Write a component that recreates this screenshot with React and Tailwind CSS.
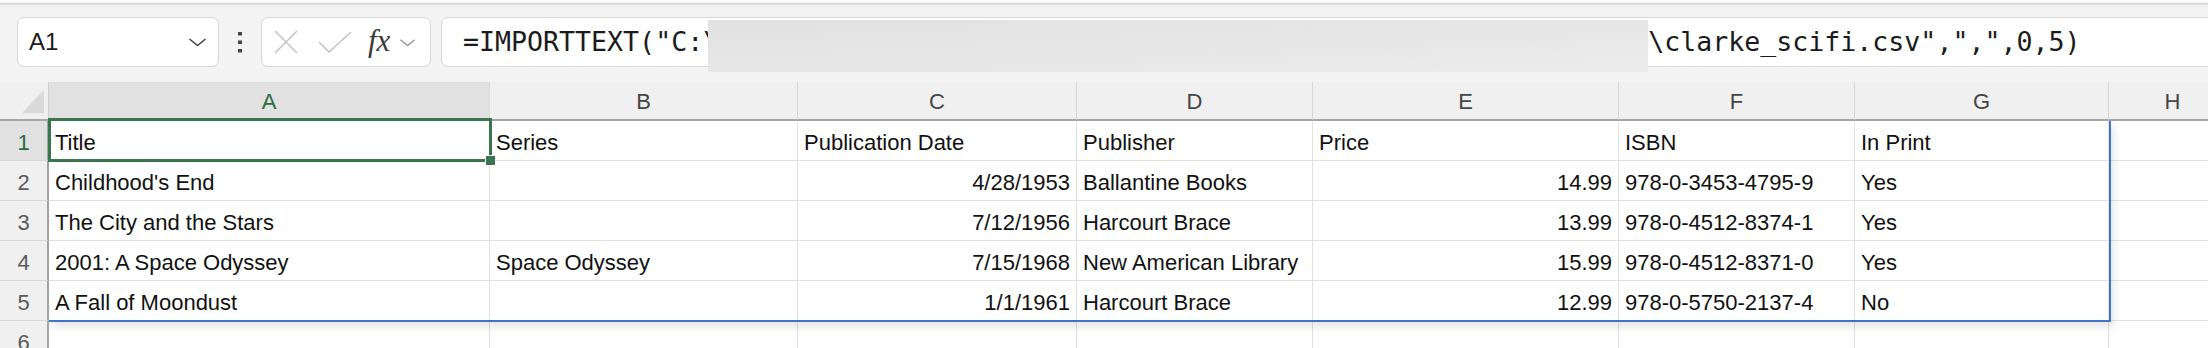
import React from 'react';

const COLS = ['A', 'B', 'C', 'D', 'E', 'F', 'G', 'H'];

// A1 holds the IMPORTTEXT formula, the rest spills from it
const ROWS = [
  ['Title', 'Series', 'Publication Date', 'Publisher', 'Price', 'ISBN', 'In Print', ''],
  ["Childhood's End", '', '4/28/1953', 'Ballantine Books', '14.99', '978-0-3453-4795-9', 'Yes', ''],
  ['The City and the Stars', '', '7/12/1956', 'Harcourt Brace', '13.99', '978-0-4512-8374-1', 'Yes', ''],
  ['2001: A Space Odyssey', 'Space Odyssey', '7/15/1968', 'New American Library', '15.99', '978-0-4512-8371-0', 'Yes', ''],
  ['A Fall of Moondust', '', '1/1/1961', 'Harcourt Brace', '12.99', '978-0-5750-2137-4', 'No', ''],
  ['', '', '', '', '', '', '', ''],
];

const isRight = (r, c) => r > 0 && (c === 2 || c === 4);

const cellFont = "font-['Liberation_Sans',sans-serif]";

const Chevron = ({ className, color = '#444' }) => (
  <svg className={className} viewBox="0 0 20 10" fill="none">
    <path d="M2 2 L10 8.5 L18 2" stroke={color} strokeWidth="1.6" />
  </svg>
);

const FormulaBar = () => (
  <div className="flex items-center pt-[13px] pb-[15px]">
    <div className="ml-[17px] w-[202px] h-[50px] shrink-0 rounded-[7px] border border-[#d6d6d6] bg-white flex items-center justify-between pl-[11px] pr-[10px]">
      <span className="font-['Liberation_Sans',sans-serif] text-[24px] leading-none text-[#1b1b1b]">A1</span>
      <Chevron className="w-[21px] h-[10px]" />
    </div>
    <div className="w-[42px] shrink-0 flex justify-center">
      <svg width="4" height="21" viewBox="0 0 4 21">
        <rect x="0" y="0" width="4" height="3.5" fill="#444" />
        <rect x="0" y="8.5" width="4" height="3.5" fill="#444" />
        <rect x="0" y="17" width="4" height="3.5" fill="#444" />
      </svg>
    </div>
    <div className="w-[170px] h-[50px] shrink-0 rounded-[7px] border border-[#d6d6d6] bg-white flex items-center pl-[11px]">
      <svg width="26" height="24" viewBox="0 0 26 24" fill="none">
        <path d="M2 1 L24 23 M24 1 L2 23" stroke="#c4c4c4" strokeWidth="1.6" />
      </svg>
      <svg className="ml-[19px]" width="34" height="22" viewBox="0 0 34 22" fill="none">
        <path d="M1 11 L11 21 L33 1" stroke="#c4c4c4" strokeWidth="1.6" />
      </svg>
      <span className="ml-[16px] font-['Liberation_Serif',serif] italic text-[31px] leading-none text-[#3a3a3a] -mt-[4px]">fx</span>
      <Chevron className="ml-[8px] w-[19px] h-[9px]" color="#9a9a9a" />
    </div>
    <div className="relative ml-[10px] w-[1790px] h-[50px] shrink-0 rounded-l-[7px] border border-[#d6d6d6] bg-white flex items-center pl-[21px]">
      <span className="font-['DejaVu_Sans_Mono',monospace] text-[26.6px] leading-none text-[#1b1b1b] whitespace-pre">
        {'=IMPORTTEXT("C:\\'}
        <span className="inline-block w-[929px]" />
        {'\\clarke_scifi.csv",",",0,5)'}
      </span>
      <div className="absolute left-[266px] top-[2px] w-[940px] h-[52px] bg-linear-to-br from-[#e1e1e1] to-[#ececec]" />
    </div>
  </div>
);

const Sheet = () => (
  <div className="relative grid grid-cols-[49px_441px_308px_279px_236px_306px_236px_254px_128px] grid-rows-[39px_repeat(6,40px)]">
    <div className="relative bg-[#f0f0f0] border-r border-r-[#cfcfcf] border-b-2 border-b-[#a6a6a6]">
      <svg className="absolute left-[22px] top-[8px]" width="22" height="23" viewBox="0 0 22 23">
        <path d="M22 0 L22 23 L0 23 Z" fill="#d9d9d9" />
      </svg>
    </div>
    {COLS.map((c, i) => (
      <div
        key={c}
        className={`flex items-center justify-center border-r border-r-[#d6d6d6] border-b-2 ${cellFont} text-[22px] leading-none ${
          i === 0 ? 'bg-[#e1e1e1] border-b-[#3a7550] text-[#2d6b45]' : 'bg-[#f0f0f0] border-b-[#a6a6a6] text-[#454545]'
        }`}
      >
        <span className="mt-[2px]">{c}</span>
      </div>
    ))}
    {ROWS.map((row, r) => (
      <React.Fragment key={r}>
        <div
          className={`flex items-end justify-center pb-[6px] border-r-2 border-r-[#a6a6a6] border-b border-b-[#d9d9d9] ${cellFont} text-[22px] leading-none ${
            r === 0 ? 'bg-[#e1e1e1] text-[#2d6b45]' : 'bg-[#f0f0f0] text-[#5a5a5a]'
          }`}
        >
          {r + 1}
        </div>
        {row.map((v, c) => (
          <div
            key={c}
            className={`relative flex items-end pb-[6px] px-[6px] bg-white border-r border-b border-[#e1e1e1] whitespace-nowrap ${cellFont} text-[22px] leading-none text-[#111] ${
              isRight(r, c) ? 'justify-end' : 'justify-start'
            } ${r === 0 && c === 0 ? 'overflow-visible' : 'overflow-hidden'}`}
          >
            <span>{v}</span>
            {r === 0 && c === 0 && (
              <div className="absolute -left-[1px] -top-[3px] -right-[3px] -bottom-[2px] border-[3px] border-[#3a7550] z-20">
                <div className="absolute -right-[7px] -bottom-[7px] w-[11px] h-[11px] bg-[#3a7550] border border-white" />
              </div>
            )}
          </div>
        ))}
      </React.Fragment>
    ))}
    <div className="absolute left-[49px] top-[39px] w-[2062px] h-[201px] border-r-2 border-b-2 border-[#4472c4] shadow-[3px_5px_8px_rgba(0,0,0,0.10)] pointer-events-none z-10" />
  </div>
);

export default function App() {
  return (
    <div className="w-[2208px] h-[348px] overflow-hidden bg-[#f3f3f3]">
      <div className="h-[4px] bg-[#fafafa] border-b border-[#cdcdcd] shadow-[0_1px_3px_rgba(0,0,0,0.08)]" />
      <FormulaBar />
      <Sheet />
    </div>
  );
}
